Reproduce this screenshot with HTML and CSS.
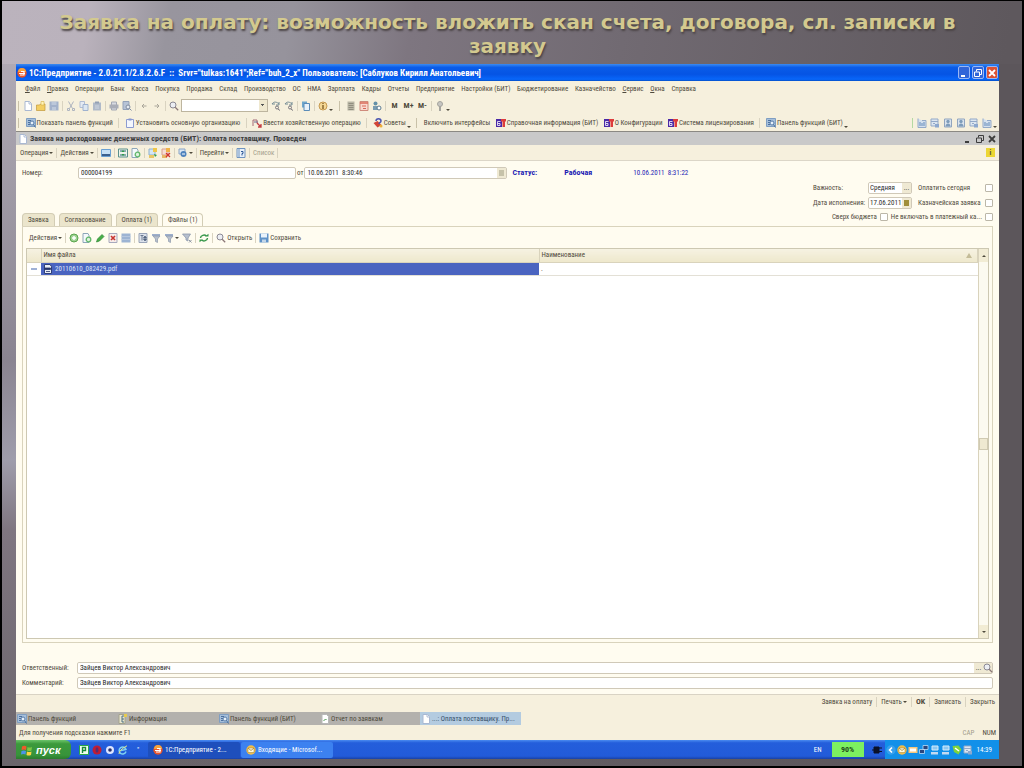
FILE: index.html
```html
<!DOCTYPE html>
<html lang="ru">
<head>
<meta charset="utf-8">
<title>Заявка на оплату</title>
<link rel="stylesheet" href="styles.css">
</head>
<body>
<svg class="defs" aria-hidden="true">
  <symbol id="doc" viewBox="0 0 10 10"><path d="M2 .5h4.5L8.5 2.500v7H2z" fill="#fff" stroke="#a9b8d2"/><path d="M6 1v2h2" fill="none" stroke="#8fa3c4" stroke-width=".7"/></symbol>
  <symbol id="folder" viewBox="0 0 10 10"><path d="M.5 4h3l1-1H9v6.500H.5z" fill="#f3ce62" stroke="#c19a3c" stroke-width=".7"/><path d="M5 .5h3v3.500H5z" fill="#fff4b8" stroke="#d4ae47" stroke-width=".6"/></symbol>
  <symbol id="save" viewBox="0 0 10 10"><path d="M.5.5h9v9h-9z" fill="#a3b2cb"/><path d="M2.500 1h5v3h-5zM3 6h4v3H3z" fill="#bcc8da"/></symbol>
  <symbol id="cut" viewBox="0 0 10 10"><path d="M2.500.5l4 7M7.500.5l-4 7" stroke="#aeb4bf" fill="none"/><path d="M1.500 7.500h2v2h-2zM6.500 7.500h2v2h-2z" fill="none" stroke="#aeb4bf"/></symbol>
  <symbol id="copy" viewBox="0 0 10 10"><path d="M1 .5h4.500v6H1z" fill="#e5ebf3" stroke="#b0bdd3"/><path d="M4 3.500h5v6H4z" fill="#dce7f2" stroke="#9fb2cf"/></symbol>
  <symbol id="paste" viewBox="0 0 10 10"><path d="M1 1.500h8v8H1z" fill="#b0bac9"/><path d="M3 .5h4v2H3z" fill="#93a0b5"/><path d="M3 5h4M3 7h4" stroke="#cdd5e0"/></symbol>
  <symbol id="print" viewBox="0 0 10 10"><path d="M2.500 1h5v8h-5z" fill="#d7dae1" stroke="#a3a8b3"/><path d="M.5 3.500h9v4h-9z" fill="#a9adb7"/></symbol>
  <symbol id="preview" viewBox="0 0 10 10"><path d="M1 .5h6v8H1z" fill="#b7c3d6" stroke="#94a2b9"/><circle cx="6" cy="6" r="2" fill="#e5eaf2" stroke="#818da1"/><path d="M7.500 7.500l2 2" stroke="#818da1"/></symbol>
  <symbol id="undo" viewBox="0 0 10 10"><path d="M7.500 5H3M5 3L3 5l2 2" fill="none" stroke="#aaa69a"/></symbol>
  <symbol id="redo" viewBox="0 0 10 10"><path d="M2.500 5H7M5 3l2 2-2 2" fill="none" stroke="#aaa69a"/></symbol>
  <symbol id="find" viewBox="0 0 10 10"><circle cx="4" cy="4" r="3" fill="#eceef3" stroke="#8b8994"/><path d="M6.200 6.200l3 3" stroke="#8b7777" stroke-width="1.300"/></symbol>
  <symbol id="findnext" viewBox="0 0 10 10"><path d="M1 3c2-3 5-2 7 0M1 3h3M8 1v3H5" fill="none" stroke="#738b94"/><circle cx="6" cy="6.500" r="1.500" fill="none" stroke="#77747c"/><path d="M7 8l2 1.500" stroke="#77747c"/></symbol>
  <symbol id="pages" viewBox="0 0 10 10"><path d="M1 .5h5v6H1z" fill="#6fa8cd"/><path d="M3 2.500h5.500v7H3z" fill="#e8f2fa" stroke="#5b8cb8"/></symbol>
  <symbol id="info" viewBox="0 0 10 10"><circle cx="5" cy="5" r="4" fill="#f4d795" stroke="#c69a51"/><path d="M5 4v4M5 2v1" stroke="#7a571f" stroke-width="1.300"/></symbol>
  <symbol id="calc" viewBox="0 0 10 10"><path d="M1.500.5h7v9h-7z" fill="#b9b6a5"/><path d="M2.500 2.500h5M2.500 4.500h5M2.500 6.500h5M2.500 8.500h5" stroke="#858375" stroke-width=".8"/></symbol>
  <symbol id="calendar" viewBox="0 0 10 10"><path d="M1 .5h8v9H1z" fill="#f9d9cf" stroke="#cf8b7c"/><path d="M1 2h8" stroke="#d86a59" stroke-width="1.500"/><path d="M3 5h4M4 7.500h3" stroke="#d86a59"/></symbol>
  <symbol id="users" viewBox="0 0 10 10"><circle cx="3.500" cy="2.500" r="2" fill="#6490a8"/><path d="M1 5h5v4H1z" fill="#7a9cb1"/><circle cx="7" cy="7" r="2" fill="#fff" stroke="#5a7a90"/></symbol>
  <symbol id="key" viewBox="0 0 10 10"><circle cx="5" cy="3" r="2.500" fill="#c7c6c2" stroke="#a5a49e"/><path d="M5 5v5" stroke="#a5a49e" stroke-width="2"/></symbol>
  <symbol id="panel" viewBox="0 0 10 10"><path d="M.5.5h9v8h-9z" fill="#a6bfda" stroke="#7f9ec2"/><path d="M2 2.500h3M2 4.500h2M2 6.500h2" stroke="#4c70a0"/><circle cx="6" cy="5" r="2" fill="#e8f1fa" stroke="#587da8"/><path d="M7.500 6.500l2 3" stroke="#466a95"/></symbol>
  <symbol id="clip" viewBox="0 0 10 10"><path d="M1.500 1.500h7v8h-7z" fill="#f3f6fd" stroke="#8c9bd0"/><path d="M3.500.5h3v2h-3z" fill="#8797cf"/></symbol>
  <symbol id="oper" viewBox="0 0 10 10"><path d="M1 8V2h4v3" fill="none" stroke="#a46a76"/><path d="M2 4h4" stroke="#6d698f"/><path d="M5 5l4 4M9 6v3H6" fill="none" stroke="#c33c43" stroke-width="1.300"/></symbol>
  <symbol id="tips" viewBox="0 0 10 10"><path d="M.5 5l4-2 4 4-4 2.500z" fill="#d14536"/><path d="M3 3c0-3 5-3 5 0 0 2-2 1-2 3" fill="none" stroke="#4a55b0" stroke-width="1.500"/><circle cx="8" cy="8" r="1.500" fill="#eeb13a"/></symbol>
  <symbol id="bit" viewBox="0 0 10 10"><path d="M0 1h6v8H0z" fill="#4a29a6"/><path d="M4.500 3.500H1.500v4h2.500v-2H2" fill="none" stroke="#fff" stroke-width=".8"/><path d="M5 1h5v2.500H9V9H6.500V3.500H5z" fill="#dd3c3c"/></symbol>
  <symbol id="chart" viewBox="0 0 10 10"><path d="M1 .5v9h8v-7H5" fill="#d4e0ee" stroke="#93a9c8"/><path d="M3 8V4M5 8V5M7 8V4" stroke="#6389b8"/></symbol>
  <symbol id="cells" viewBox="0 0 10 10"><path d="M1 1h7v7H1z" fill="#dce6f0" stroke="#93a9c8"/><path d="M1 3.500h7M3 5.500h2" stroke="#93a9c8"/><path d="M5 6h4v3.500H5z" fill="#8da8ce"/></symbol>
  <symbol id="person" viewBox="0 0 10 10"><path d="M1.500 1h7v8h-7z" fill="#dbe4ed" stroke="#91a5bf"/><circle cx="5" cy="3.500" r="1.700" fill="#7f9dbb"/><path d="M2.500 8.500c0-4 5-4 5 0z" fill="#7f9dbb"/></symbol>
  <symbol id="img" viewBox="0 0 10 10"><path d="M.5 1.500h9v7h-9z" fill="#c5e0f6" stroke="#6aa0d3"/><path d="M1 6h8v2H1z" fill="#3b608e"/></symbol>
  <symbol id="swap" viewBox="0 0 10 10"><path d="M.5 1h9v8h-9z" fill="#eef3ea" stroke="#5b908c"/><path d="M2 3h6M2 7h6" stroke="#286b76"/><path d="M5 2L3.500 4h3zM5 8L3.500 6h3z" fill="#2d9a44"/></symbol>
  <symbol id="docrefresh" viewBox="0 0 10 10"><path d="M1 .5h5l1 2v7H1z" fill="#f4f9fc" stroke="#8da6b8"/><circle cx="6.500" cy="6.500" r="2.300" fill="#dff3df" stroke="#62b76b" stroke-width="1.300"/></symbol>
  <symbol id="post" viewBox="0 0 10 10"><path d="M1 1h6v6H1z" fill="#d5e6f4" stroke="#8db0cf"/><path d="M5 0h4v4H5z" fill="#f0c648"/><path d="M1 7h5v3H1z" fill="#e8c767"/><path d="M6 6l3 1-2 2z" fill="#35a045"/></symbol>
  <symbol id="unpost" viewBox="0 0 10 10"><path d="M1 1h6v6H1z" fill="#f6dcd3" stroke="#d8a08e"/><path d="M5 0h4v4H5z" fill="#f0b348"/><path d="M1 7h5v3H1z" fill="#e8b767"/><path d="M5 5l4 4M9 5L5 9" stroke="#d1342f" stroke-width="1.300"/></symbol>
  <symbol id="link" viewBox="0 0 10 10"><path d="M1 1h6v5H1z" fill="#dbe6f2" stroke="#8aa5c7"/><circle cx="5.500" cy="6" r="3" fill="#4f83bd"/><path d="M4 6h3" stroke="#fff"/></symbol>
  <symbol id="help" viewBox="0 0 10 10"><path d="M1 .5h8v9H1z" fill="#e7f0fa" stroke="#6f93bf"/><path d="M3 1v8" stroke="#6f93bf"/><path d="M5 3.500h2v2H6v2" fill="none" stroke="#2c5996"/></symbol>
  <symbol id="note" viewBox="0 0 10 10"><path d="M1 .5h6v9H1z" fill="#e9e6cf" stroke="#a5a38c"/><path d="M6 2H4v6h2M4 5h2" fill="none" stroke="#4d7085"/><path d="M6 0h3v3H6z" fill="#e7cb4e"/></symbol>
  <symbol id="report" viewBox="0 0 10 10"><path d="M2 .5h4.500l2 2v7H2z" fill="#fff" stroke="#b8b8b8"/><path d="M3.500 7l2-2 1 1" fill="none" stroke="#4d9a52"/></symbol>
  <symbol id="add" viewBox="0 0 10 10"><circle cx="5" cy="5" r="4" fill="#9fd293" stroke="#5aa54d"/><path d="M5 3v4M3 5h4" stroke="#fff" stroke-width="1.500"/></symbol>
  <symbol id="edit" viewBox="0 0 10 10"><path d="M1.500 9l1-3L7 1.500 9 3.500 4.500 8z" fill="#48ae48" stroke="#2e8635" stroke-width=".7"/></symbol>
  <symbol id="del" viewBox="0 0 10 10"><path d="M1 .5h8v9H1z" fill="#f7ecea" stroke="#a7a9bd"/><path d="M3 3l4 4M7 3L3 7" stroke="#c73431" stroke-width="1.600"/></symbol>
  <symbol id="grid" viewBox="0 0 10 10"><path d="M.5.5h9v9h-9z" fill="#9db4d3"/><path d="M.5 3.500h9M.5 6.500h9" stroke="#bccce1" stroke-width=".8"/></symbol>
  <symbol id="filterset" viewBox="0 0 10 10"><path d="M1 .5h8v9H1z" fill="#dce2eb" stroke="#99a4b8"/><path d="M2.500 2.500h3M4 2.500v5M7 3L5.500 5h3zM7 8L5.500 6h3z" stroke="#54657f" stroke-width=".8" fill="#54657f"/></symbol>
  <symbol id="filter" viewBox="0 0 10 10"><path d="M1 1h8v2H1z" fill="#9dafcc"/><path d="M2 3h7L6.500 6v3.500l-2-1V6z" fill="#b7c0ce" stroke="#8c98ab" stroke-width=".7"/></symbol>
  <symbol id="filteroff" viewBox="0 0 10 10"><path d="M.5 1h8L6 5v3L4 7V5z" fill="#b7c0ce" stroke="#8c98ab" stroke-width=".8"/><path d="M7 7l2.500 2.500M9.500 7L7 9.500" stroke="#9098a5"/></symbol>
  <symbol id="refresh" viewBox="0 0 10 10"><path d="M1.500 5a3.500 3 0 0 1 6-2M8.500 5a3.500 3 0 0 1-6 2" fill="none" stroke="#37974a" stroke-width="1.400"/><path d="M6 3.500h3.500V.8zM4 6.500H.5v2.700z" fill="#37974a"/></symbol>
  <symbol id="floppy" viewBox="0 0 10 10"><path d="M.5.5h9v9h-9z" fill="#5f92c8"/><path d="M2 .5h6v4H2z" fill="#e9f2fb"/><path d="M3 6.500h4v3H3z" fill="#c3d6e9"/></symbol>
  <symbol id="onec" viewBox="0 0 10 10"><circle cx="5" cy="5" r="4.700" fill="#e8552c"/><path d="M1 4a4 4 0 0 1 8 0z" fill="#f7a23c"/><path d="M2 5.500h6M4 3.500h3v3.500H3" fill="none" stroke="#fff" stroke-width="1.200"/></symbol>
  <symbol id="flag" viewBox="0 0 12 12"><path d="M1 2.500q2.500-1.500 4.500 0L5 6Q3 5 .5 6z" fill="#ef5a2a"/><path d="M6.500 3q2 1 4.500 0l-.5 3.500q-2 1-4.500 0z" fill="#7cc443"/><path d="M.5 7Q3 6 5 7l-.5 3.500q-2-1-4.500 0z" fill="#4a93e8"/><path d="M6 7.500q2 1 4.500 0L10 11q-2.500 1-4.500 0z" fill="#fcd23c"/></symbol>
  <symbol id="greenapp" viewBox="0 0 10 10"><path d="M.5.500h9v9h-9z" fill="#f1fff1" stroke="#2aa648"/><path d="M3.500 8V2.500h3v3h-3" fill="none" stroke="#1c8a3b" stroke-width="1.400"/></symbol>
  <symbol id="opera" viewBox="0 0 10 10"><circle cx="5" cy="5" r="4.500" fill="#c01d35"/><ellipse cx="5" cy="5" rx="1.500" ry="2.700" fill="#5d2a6f"/></symbol>
  <symbol id="disc" viewBox="0 0 10 10"><circle cx="5" cy="5" r="4" fill="#dfe6ff"/><circle cx="5" cy="5" r="1.800" fill="#27306c"/></symbol>
  <symbol id="ie" viewBox="0 0 10 10"><path d="M8 6.500A3.500 3.500 0 1 1 8 4.500L3 5.500" fill="none" stroke="#7fd2f2" stroke-width="1.500"/><path d="M1 9Q1 5 9 .8" fill="none" stroke="#e1e58b"/></symbol>
  <symbol id="outlook" viewBox="0 0 10 10"><circle cx="5" cy="5" r="4.700" fill="#f1bd4b"/><path d="M2 3h6v4.500H2z" fill="#fff9df" stroke="#a07f2e" stroke-width=".5"/><path d="M2 3l3 2.500L8 3" fill="none" stroke="#a07f2e" stroke-width=".8"/></symbol>
  <symbol id="plug" viewBox="0 0 10 10"><path d="M2 2h5v6H2zM7 3h3M7 6.500h3M0 5h2" fill="#0b1129" stroke="#0b1129"/></symbol>
  <symbol id="arrowleft" viewBox="0 0 10 10"><circle cx="5" cy="5" r="4.700" fill="#38a0ee"/><path d="M6 2.500L3.500 5 6 7.500" fill="none" stroke="#fff" stroke-width="1.600"/></symbol>
  <symbol id="mail" viewBox="0 0 10 10"><path d="M.5 2h9v6h-9z" fill="#f7c77c"/><path d="M2 3.500h6v3H2z" fill="#fff"/></symbol>
  <symbol id="net" viewBox="0 0 10 10"><path d="M4 .5h5v4H4zM.5 4.500h5v4h-5z" fill="#29467d" stroke="#b9dcf8" stroke-width=".8"/></symbol>
  <symbol id="monitor" viewBox="0 0 10 10"><path d="M2 1h6v4H2z" fill="#8bc8f2" stroke="#d4ecfb"/><path d="M1 7h7v2.500H1z" fill="#c4daf0"/></symbol>
  <symbol id="shield" viewBox="0 0 10 10"><path d="M.5 1l6-.5 3 4-3 5L2 7z" fill="#7ed33d"/><path d="M3 3l4 3" stroke="#fff" stroke-width="1.500"/></symbol>
  <symbol id="pdf" viewBox="0 0 10 10"><path d="M1.500.5H7l1.500 2v7h-7z" fill="#e8edf5" stroke="#2f3f78"/><path d="M1.500 4h6v1.500h-6M3 7.500h4" fill="#26346a" stroke="#26346a" stroke-width=".8"/></symbol>
  <symbol id="min" viewBox="0 0 10 10"><path d="M2 8h4" stroke="currentColor" stroke-width="2"/></symbol>
  <symbol id="restore" viewBox="0 0 10 10"><path d="M3.500 3.500v-2h5v5h-2M1.500 4h5v4.500h-5z" fill="none" stroke="currentColor"/></symbol>
  <symbol id="close" viewBox="0 0 10 10"><path d="M2 2l6 6M8 2L2 8" stroke="currentColor" stroke-width="1.800"/></symbol>
</svg>

<h1 class="slide-title">Заявка на оплату: возможность вложить скан счета, договора, сл. записки в заявку</h1>

<main class="window">
  <header class="titlebar">
    <svg class="icon"><use href="#onec"/></svg>
    <span class="titlebar-text">1С:Предприятие - 2.0.21.1/2.8.2.6.F &nbsp;:: &nbsp;Srvr="tulkas:1641";Ref="buh_2_x" Пользователь: [Саблуков Кирилл Анатольевич]</span>
    <button class="win-btn" aria-label="Свернуть"><svg class="icon"><use href="#min"/></svg></button>
    <button class="win-btn" aria-label="Восстановить"><svg class="icon"><use href="#restore"/></svg></button>
    <button class="win-btn win-close" aria-label="Закрыть"><svg class="icon"><use href="#close"/></svg></button>
  </header>

  <nav class="bar menu">
    <button><span><u>Ф</u>айл</span></button><button><span><u>П</u>равка</span></button><button>Операции</button><button>Банк</button><button>Касса</button><button>Покупка</button><button>Продажа</button><button>Склад</button><button>Производство</button><button>ОС</button><button>НМА</button><button>Зарплата</button><button>Кадры</button><button>Отчеты</button><button>Предприятие</button><button>Настройки (БИТ)</button><button>Бюджетирование</button><button>Казначейство</button><button><span><u>С</u>ервис</span></button><button><span><u>О</u>кна</span></button><button>Справка</button>
  </nav>

  <div class="bar tools">
    <i class="grip"></i>
    <button aria-label="Новый"><svg class="icon"><use href="#doc"/></svg></button>
    <button aria-label="Открыть"><svg class="icon"><use href="#folder"/></svg></button>
    <button aria-label="Сохранить"><svg class="icon"><use href="#save"/></svg></button>
    <i class="sep"></i>
    <button aria-label="Вырезать"><svg class="icon"><use href="#cut"/></svg></button>
    <button aria-label="Копировать"><svg class="icon"><use href="#copy"/></svg></button>
    <button aria-label="Вставить"><svg class="icon"><use href="#paste"/></svg></button>
    <i class="sep"></i>
    <button aria-label="Печать"><svg class="icon"><use href="#print"/></svg></button>
    <button aria-label="Просмотр"><svg class="icon"><use href="#preview"/></svg></button>
    <i class="sep"></i>
    <button aria-label="Отменить"><svg class="icon"><use href="#undo"/></svg></button>
    <button aria-label="Вернуть"><svg class="icon"><use href="#redo"/></svg></button>
    <i class="sep"></i>
    <span class="search">
      <svg class="icon"><use href="#find"/></svg>
      <select class="search-select" aria-label="Поиск"><option></option></select>
    </span>
    <button aria-label="Найти далее"><svg class="icon"><use href="#findnext"/></svg></button>
    <button aria-label="Найти назад"><svg class="icon"><use href="#findnext"/></svg></button>
    <i class="sep"></i>
    <button aria-label="Окна"><svg class="icon"><use href="#pages"/></svg></button>
    <i class="sep"></i>
    <button class="with-caret" aria-label="Справка"><svg class="icon"><use href="#info"/></svg><i class="caret low"></i></button>
    <i class="grip wide-grip"></i>
    <button aria-label="Калькулятор"><svg class="icon"><use href="#calc"/></svg></button>
    <button aria-label="Календарь"><svg class="icon"><use href="#calendar"/></svg></button>
    <button aria-label="Пользователи"><svg class="icon"><use href="#users"/></svg></button>
    <i class="sep"></i>
    <button class="mem">M</button><button class="mem">M+</button><button class="mem">M-</button>
    <i class="sep"></i>
    <button class="with-caret" aria-label="Настройка"><svg class="icon"><use href="#key"/></svg><i class="caret low"></i></button>
  </div>

  <div class="bar split">
    <div class="commands">
      <i class="grip"></i>
      <button><svg class="icon"><use href="#panel"/></svg>Показать панель функций</button>
      <i class="sep"></i>
      <button><svg class="icon"><use href="#clip"/></svg>Установить основную организацию</button>
      <i class="sep"></i>
      <button><svg class="icon"><use href="#oper"/></svg>Ввести хозяйственную операцию</button>
      <i class="sep"></i>
      <button><svg class="icon"><use href="#tips"/></svg>Советы <i class="caret low"></i></button>
      <i class="grip"></i>
      <button>Включить интерфейсы</button>
      <button><svg class="icon"><use href="#bit"/></svg>Справочная информация (БИТ)</button>
      <button><svg class="icon"><use href="#bit"/></svg>О Конфигурации</button>
      <button><svg class="icon"><use href="#bit"/></svg>Система лицензирования</button>
      <i class="sep"></i>
      <button><svg class="icon"><use href="#panel"/></svg>Панель функций (БИТ) <i class="caret low"></i></button>
    </div>
    <div class="views">
      <i class="grip green"></i>
      <button aria-label="Отчёт"><svg class="icon"><use href="#chart"/></svg></button>
      <button aria-label="Таблица"><svg class="icon"><use href="#cells"/></svg></button>
      <button aria-label="Контрагент"><svg class="icon"><use href="#person"/></svg></button>
      <button aria-label="Сотрудник"><svg class="icon"><use href="#person"/></svg></button>
      <button aria-label="Документ"><svg class="icon"><use href="#cells"/></svg></button>
      <button class="with-caret" aria-label="Ещё"><svg class="icon"><use href="#chart"/></svg><i class="caret low"></i></button>
    </div>
  </div>

  <div class="doc-title">
    <svg class="icon"><use href="#doc"/></svg>
    <h2>Заявка на расходование денежных средств (БИТ): Оплата поставщику. Проведен</h2>
    <button aria-label="Свернуть"><svg class="icon"><use href="#min"/></svg></button>
    <button aria-label="Восстановить"><svg class="icon"><use href="#restore"/></svg></button>
    <button aria-label="Закрыть"><svg class="icon"><use href="#close"/></svg></button>
  </div>

  <div class="doc-tools">
    <button>Операция <i class="caret"></i></button>
    <i class="sep"></i>
    <button>Действия <i class="caret"></i></button>
    <i class="sep"></i>
    <button aria-label="Записать"><svg class="icon"><use href="#img"/></svg></button>
    <i class="sep"></i>
    <button aria-label="Обменять"><svg class="icon"><use href="#swap"/></svg></button>
    <button aria-label="Перечитать"><svg class="icon"><use href="#docrefresh"/></svg></button>
    <i class="sep"></i>
    <button aria-label="Провести"><svg class="icon"><use href="#post"/></svg></button>
    <button aria-label="Отменить проведение"><svg class="icon"><use href="#unpost"/></svg></button>
    <i class="sep"></i>
    <button aria-label="На основании"><svg class="icon"><use href="#link"/></svg><i class="caret"></i></button>
    <i class="sep"></i>
    <button>Перейти <i class="caret"></i></button>
    <i class="sep"></i>
    <button aria-label="Помощь"><svg class="icon"><use href="#help"/></svg></button>
    <i class="sep"></i>
    <button class="muted">Список</button>
    <i class="sep"></i>
    <button class="bulb" aria-label="Подсказка">i</button>
  </div>

  <section class="form">
    <div class="number-row">
      <label class="field-label" for="num">Номер:</label>
      <input id="num" class="num" value="000004199">
      <label for="dt">от</label>
      <span class="combo date"><input id="dt" value="10.06.2011  8:30:46"><button aria-label="Календарь"><i class="dots"></i></button></span>
      <span class="status"><b>Статус:</b><b class="state">Рабочая</b><span>10.06.2011 &nbsp;8:31:22</span></span>
    </div>
    <div class="tabs-row">
      <div class="tabs" role="tablist">
        <button role="tab">Заявка</button><button role="tab">Согласование</button><button role="tab">Оплата (1)</button><button role="tab" class="active" aria-selected="true">Файлы (1)</button>
      </div>
      <div class="options">
        <div class="opt"><label class="caption" for="prio">Важность:</label><span class="combo"><input id="prio" value="Средняя"><button aria-label="Выбрать">...</button></span><label for="c1" class="wide">Оплатить сегодня</label><input type="checkbox" id="c1"></div>
        <div class="opt"><label class="caption" for="due">Дата исполнения:</label><span class="combo"><input id="due" value="17.06.2011"><button aria-label="Календарь"><i class="dots gold"></i></button></span><label for="c2" class="wide">Казначейская заявка</label><input type="checkbox" id="c2"></div>
        <div class="opt"><label for="c3">Сверх бюджета</label><input type="checkbox" id="c3"><label for="c4">Не включать в платежный ка...</label><input type="checkbox" id="c4"></div>
      </div>
    </div>
    <div class="panel">
      <div class="panel-tools">
        <button>Действия <i class="caret"></i></button>
        <i class="sep"></i>
        <button aria-label="Добавить"><svg class="icon"><use href="#add"/></svg></button>
        <button aria-label="Скопировать"><svg class="icon"><use href="#docrefresh"/></svg></button>
        <button aria-label="Изменить"><svg class="icon"><use href="#edit"/></svg></button>
        <button aria-label="Удалить"><svg class="icon"><use href="#del"/></svg></button>
        <button aria-label="Список"><svg class="icon"><use href="#grid"/></svg></button>
        <i class="sep"></i>
        <button aria-label="Отбор"><svg class="icon"><use href="#filterset"/></svg></button>
        <button aria-label="Фильтр"><svg class="icon"><use href="#filter"/></svg></button>
        <button aria-label="История отборов"><svg class="icon"><use href="#filter"/></svg><i class="caret"></i></button>
        <button aria-label="Отключить отбор"><svg class="icon"><use href="#filteroff"/></svg></button>
        <i class="sep"></i>
        <button aria-label="Обновить"><svg class="icon"><use href="#refresh"/></svg></button>
        <i class="sep"></i>
        <button><svg class="icon"><use href="#find"/></svg>Открыть</button>
        <i class="sep"></i>
        <button><svg class="icon"><use href="#floppy"/></svg>Сохранить</button>
      </div>
      <div class="list">
        <table class="files">
          <thead><tr><th class="mark"></th><th class="file">Имя файла</th><th><span class="th-in">Наименование<i class="sort"></i></span></th></tr></thead>
          <tbody><tr><td class="mark"><i class="dash"></i></td><td class="selected"><span class="cell"><svg class="icon"><use href="#pdf"/></svg>20110610_082429.pdf</span></td><td>.</td></tr></tbody>
        </table>
        <div class="scroll"><button aria-label="Вверх"><i class="caret up"></i></button><i class="thumb"></i><button aria-label="Вниз"><i class="caret"></i></button></div>
      </div>
    </div>
    <div class="foot-row"><label class="field-label" for="resp">Ответственный:</label><span class="combo grow"><input id="resp" value="Зайцев Виктор Александрович"><button aria-label="Выбрать">...</button><button aria-label="Открыть"><svg class="icon"><use href="#find"/></svg></button></span></div>
    <div class="foot-row"><label class="field-label" for="comm">Комментарий:</label><input id="comm" class="grow" value="Зайцев Виктор Александрович"></div>
  </section>

  <div class="actions">
    <button>Заявка на оплату</button><i class="sep"></i><button>Печать <i class="caret"></i></button><i class="sep"></i><button><b>OK</b></button><i class="sep"></i><button>Записать</button><i class="sep"></i><button>Закрыть</button>
  </div>

  <div class="mdi">
    <button><svg class="icon"><use href="#panel"/></svg>Панель функций</button>
    <button><svg class="icon"><use href="#note"/></svg>Информация</button>
    <button><svg class="icon"><use href="#panel"/></svg>Панель функций (БИТ)</button>
    <button><svg class="icon"><use href="#report"/></svg>Отчет по заявкам</button>
    <button class="current"><svg class="icon"><use href="#doc"/></svg>...: Оплата поставщику. Пр...</button>
  </div>

  <div class="statusbar"><span class="hint">Для получения подсказки нажмите F1</span><span class="muted">CAP</span><span>NUM</span></div>

  <footer class="taskbar">
    <button class="start"><svg class="flag"><use href="#flag"/></svg>пуск</button>
    <div class="quick">
      <svg class="icon"><use href="#greenapp"/></svg><svg class="icon"><use href="#opera"/></svg><svg class="icon"><use href="#disc"/></svg><svg class="icon"><use href="#ie"/></svg><span class="more">"</span>
    </div>
    <button class="task pressed"><svg class="icon"><use href="#onec"/></svg>1С:Предприятие - 2...</button>
    <button class="task"><svg class="icon"><use href="#outlook"/></svg>Входящие - Microsof...</button>
    <span class="lang">EN</span>
    <span class="battery">90%</span>
    <svg class="icon plug"><use href="#plug"/></svg>
    <div class="tray">
      <svg class="icon"><use href="#arrowleft"/></svg><svg class="icon"><use href="#outlook"/></svg><svg class="icon"><use href="#mail"/></svg><svg class="icon"><use href="#net"/></svg><svg class="icon"><use href="#monitor"/></svg><svg class="icon"><use href="#monitor"/></svg><svg class="icon"><use href="#shield"/></svg><svg class="icon"><use href="#cells"/></svg>
      <time>14:39</time>
    </div>
  </footer>
</main>
</body>
</html>
```
FILE: styles.css
```css
* { box-sizing: border-box; }

body {
  margin: 0;
  min-height: 100vh;
  display: flex;
  flex-direction: column;
  padding: 0 23px 7px 14px;
  border: 2px solid #000;
  border-top-width: 1px;
  background:
    linear-gradient(100deg, #bbb3bd 0, #bab2bc 90px, #98959e 170px, #96939c 290px, #7e7680 410px, #716a72 620px, #5e585d 1000px) 0 0 / 100% 64px no-repeat,
    linear-gradient(90deg, transparent 60px, #5c565b 940px),
    linear-gradient(180deg, #b8b0ba 0, #a8a3ae 120px, #8a8490 360px, #9f9dab 460px, #7f7680 530px, #6b656b 100%);
  font-family: "Roboto Condensed", Roboto, "Liberation Sans", sans-serif;
  font-size: 7px;
  line-height: 10px;
  color: #4f4a3c;
}

.defs { position: absolute; width: 0; height: 0; }
.icon { width: 10px; height: 10px; flex: none; display: block; }

button, input, select {
  font: inherit;
  color: inherit;
  margin: 0;
}

button {
  display: flex;
  align-items: center;
  gap: 1px;
  padding: 0;
  border: 0;
  background: none;
  white-space: nowrap;
}

.slide-title {
  margin: 0;
  height: 63px;
  padding: 9px 40px 0;
  font: bold 20px/24px "DejaVu Sans", sans-serif;
  text-align: center;
  color: #d3c98f;
  text-shadow: 1px 2px 2px #4b4446;
}

.window {
  flex: 1;
  display: flex;
  flex-direction: column;
  background: #f6f0dd;
}

.titlebar {
  display: flex;
  align-items: center;
  gap: 2px;
  height: 17px;
  padding: 0 1px;
  background: linear-gradient(#3c8bf0, #0a5ce8 20%, #0554e4 60%, #0866fa 90%, #0450c8);
  color: #fff;
}
.titlebar-text { flex: 1; font-weight: bold; font-size: 9px; }
.win-btn {
  width: 12px;
  height: 13px;
  justify-content: center;
  border: 1px solid #9ab8f4;
  border-radius: 2px;
  background: #3165d8;
}
.win-close { background: #dc5233; }

.bar { display: flex; align-items: center; height: 16px; padding: 0 2px; }
.menu { justify-content: space-between; width: 692px; max-width: 100%; padding: 0 12px 0 9px; }

.tools { gap: 3px; height: 17px; }
.sep { width: 1px; height: 10px; background: #d9d3c0; flex: none; }
.grip { width: 1px; height: 10px; margin-right: 1px; background: #c9c1a8; flex: none; }
.grip.green { background: #b4d9a2; }
.wide-grip { margin: 0 3px; }
.search { display: flex; align-items: center; gap: 2px; }
.search-select {
  width: 87px;
  height: 13px;
  border: 1px solid #bdb59f;
  appearance: none;
  background:
    linear-gradient(#555, #555) right 3px top 4px / 3px 1px no-repeat,
    linear-gradient(#555, #555) right 4px top 5px / 1px 1px no-repeat,
    linear-gradient(90deg, #fff 77px, #efe8cf 77px);
}
.mem { width: 11px; justify-content: center; font-weight: bold; font-size: 8px; }
.caret {
  border: 2px solid transparent;
  border-top-color: currentColor;
  border-bottom: 0;
  flex: none;
}
.caret.low { align-self: flex-end; }
.caret.up { border-top: 0; border-bottom: 2px solid currentColor; }

.split { justify-content: space-between; height: 17px; }
.commands { display: flex; align-items: center; justify-content: space-between; width: 830px; }
.views { display: flex; align-items: center; gap: 3px; }

.doc-title {
  display: flex;
  align-items: center;
  gap: 2px;
  height: 14px;
  padding: 0 2px;
  border-top: 1px solid #8b8983;
  background: #c9c9c9;
  color: #3d3d3d;
}
.doc-title h2 { flex: 1; margin: 0; font-size: 8px; line-height: 10px; }

.doc-tools {
  display: flex;
  align-items: center;
  gap: 3px;
  height: 16px;
  padding: 0 4px;
  border-bottom: 1px solid #dcd6c8;
}
.muted { color: #a39d8c; }
.bulb {
  width: 9px;
  height: 9px;
  margin-left: auto;
  justify-content: center;
  background: #ecd633;
  font-weight: bold;
}

.form {
  flex: 1;
  display: flex;
  flex-direction: column;
  padding: 6px 6px 5px;
  background: #fffcf0;
}
input:not([type]), .combo {
  height: 12px;
  padding: 0 2px;
  border: 1px solid #d0c9b8;
  border-radius: 2px;
  background: #fff;
  color: #2b2b2b;
}
.combo { display: flex; align-items: stretch; padding: 0; }
.combo input:not([type]) { flex: 1; min-width: 0; height: 10px; padding: 0 2px; border: 0; }
.opt .combo input:not([type]) { padding: 0 1px; }
.combo button { width: 9px; justify-content: center; background: #efe9d3; }
.dots { width: 5px; height: 6px; background: #c6c2a9; }
.dots.gold { background: #a08e3a; }
.field-label { width: 55px; flex: none; }

.number-row { display: flex; align-items: center; gap: 1px; }
.num { width: 218px; }
.date { width: 203px; }
.status { display: flex; gap: 27px; margin-left: 4px; color: #1d1db4; }
.status b { font-size: 8px; }
.state { margin-right: 14px; }

.tabs-row { display: flex; justify-content: space-between; align-items: flex-end; }
.tabs { display: flex; gap: 4px; }
.tabs button {
  height: 13px;
  padding: 0 5px;
  border: 1px solid #d3cdb5;
  border-bottom: 0;
  border-radius: 4px 4px 0 0;
  background: #ebe5cc;
}
.tabs .active { background: #fffcf0; }
.options { display: flex; flex-direction: column; gap: 3px; padding: 3px 0 4px; white-space: nowrap; }
.opt { display: flex; align-items: center; justify-content: flex-end; gap: 3px; }
.opt .combo { width: 44px; }
.caption { width: 52px; }
.wide { width: 67px; padding-left: 3px; }
input[type="checkbox"] {
  width: 8px;
  height: 8px;
  appearance: none;
  border: 1px solid #bcb7a8;
  border-radius: 1px;
  background: #fff;
}

.panel {
  flex: 1;
  display: flex;
  flex-direction: column;
  padding: 0 3px 3px;
  border: 1px solid #d9d3bc;
}
.panel-tools { display: flex; align-items: center; gap: 3px; height: 21px; padding-left: 3px; }
.list { flex: 1; display: flex; border: 1px solid #cdc8b2; background: #fff; }
.files { flex: 1; align-self: flex-start; border-collapse: collapse; table-layout: fixed; }
.files th, .files td { height: 13px; padding: 0 2px; text-align: left; font-weight: normal; }
.files th { background: linear-gradient(#f6f2e2, #eee8cc); border-right: 1px solid #d9d3bc; border-bottom: 1px solid #d9d3bc; }
.files td { border-bottom: 1px solid #e3e0d6; }
.files .mark { width: 14px; }
.files .file { width: 498px; }
.files .selected { background: #4a64c0; color: #dfe6fb; }
.cell { display: flex; align-items: center; gap: 2px; }
.th-in { display: flex; align-items: center; justify-content: space-between; }
.sort { border: 3px solid transparent; border-top: 0; border-bottom: 5px solid #c4bc98; margin-right: 3px; }
.dash { display: block; width: 6px; height: 2px; margin: auto; background: #9fb1d6; }
.scroll {
  display: flex;
  flex-direction: column;
  justify-content: space-between;
  width: 10px;
  border-left: 1px solid #d9d3bc;
  background: #fcfaf0;
}
.scroll button { height: 13px; justify-content: center; background: #f2ecd4; }
.thumb { height: 12px; border: 1px solid #d0cab2; background: #efe9d1; }

.foot-row { display: flex; align-items: center; margin-top: 3px; }
.panel + .foot-row { margin-top: 19px; }
.grow { flex: 1; }

.actions {
  display: flex;
  align-items: center;
  justify-content: flex-end;
  gap: 4px;
  height: 18px;
  padding: 0 4px 3px 0;
  border-top: 1px solid #d9d3c4;
}
.actions b { font-size: 8px; }

.mdi { display: flex; height: 13px; background: #f6f0dd; }
.mdi button { width: 101px; padding-left: 1px; background: #b3b1ad; }
.mdi .current { background: #b3cbe0; color: #37506b; }

.statusbar { display: flex; align-items: center; gap: 8px; height: 15px; padding: 0 3px; }
.hint { flex: 1; }

.taskbar {
  display: flex;
  align-items: center;
  height: 19px;
  background: linear-gradient(#4a8bf0, #245edb 15%, #225bd9 85%, #1941a5);
  color: #fff;
}
.start {
  align-self: stretch;
  width: 55px;
  padding-left: 5px;
  gap: 3px;
  border-radius: 0 6px 6px 0;
  background: linear-gradient(#6cc46a, #3c9a3c 20%, #37933a 80%, #2b7a2d);
  font: italic bold 11px/14px "Liberation Sans", sans-serif;
}
.flag { width: 12px; height: 12px; }
.quick { display: flex; gap: 3px; width: 77px; padding-left: 8px; }
.more { margin-left: 6px; }
.task {
  width: 92px;
  height: 16px;
  padding-left: 5px;
  gap: 2px;
  margin-right: 1px;
  border-radius: 2px;
  background: #3c81f0;
}
.task.pressed { background: #1e4fbc; }
.lang { margin-left: auto; }
.battery {
  width: 32px;
  margin: 0 8px 0 10px;
  line-height: 15px;
  text-align: center;
  font-weight: bold;
  font-size: 8px;
  background: #7df060;
  color: #234a1b;
}
.plug { margin-right: 3px; }
.tray {
  display: flex;
  align-items: center;
  gap: 1px;
  align-self: stretch;
  padding: 0 7px 0 1px;
  background: #1290e9;
}
.tray time { margin-left: 3px; }
```
